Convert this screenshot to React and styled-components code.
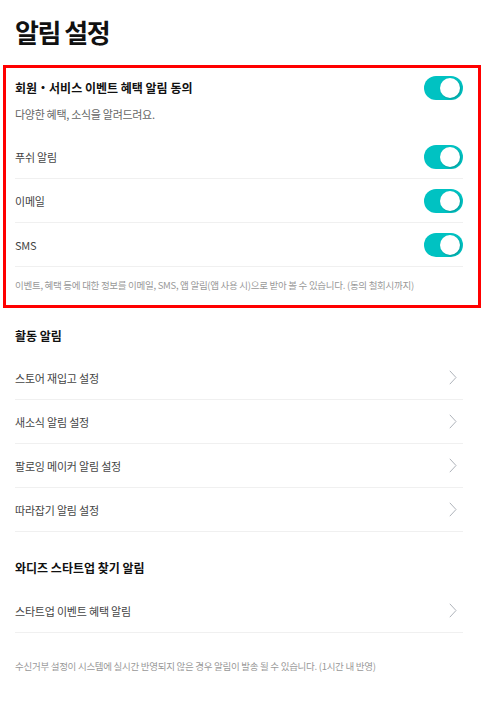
import React from 'react';
import styled, { createGlobalStyle } from 'styled-components';

const GlobalStyle = createGlobalStyle`
  body {
    margin: 0;
    background: #ffffff;
    font-family: 'Noto Sans CJK KR', 'Noto Sans', sans-serif;
    color: #333333;
  }
`;

const Page = styled.div`
  width: 448px;
  padding: 14px 27px 30px 15px;
`;

const PageTitle = styled.h1`
  margin: 0 0 15px;
  font-size: 26px;
  line-height: 36px;
  font-weight: 700;
  color: #111111;
  letter-spacing: -1.5px;
`;

const Highlight = styled.section`
  margin: 0 -18px 0 -12px;
  padding: 8px 15px 12px 9px;
  border: 3px solid #ff0000;
`;

const HeaderRow = styled.div`
  display: flex;
  align-items: center;
  justify-content: space-between;
  height: 24px;
`;

const SectionTitle = styled.h2`
  margin: ${({ $top }) => $top || 0}px 0 0;
  font-size: 12px;
  line-height: 20px;
  font-weight: 700;
  color: #111111;
`;

const Subtitle = styled.p`
  margin: 6px 0 13px;
  font-size: 11px;
  line-height: 16px;
  color: #666666;
  letter-spacing: -0.3px;
`;

const List = styled.div`
  margin-top: ${({ $top }) => $top || 0}px;
`;

const Row = styled.div`
  display: flex;
  align-items: center;
  justify-content: space-between;
  height: 43px;
  border-bottom: 1px solid #f0f0f0;
  font-size: 11px;
  color: #444444;
  letter-spacing: -0.2px;
`;

const Note = styled.p`
  margin: ${({ $top }) => $top || 0}px 0 0;
  font-size: 9.5px;
  line-height: 16px;
  color: #999999;
  letter-spacing: -0.28px;
`;

const Track = styled.span`
  position: relative;
  display: inline-block;
  width: 39px;
  height: 24px;
  border-radius: 12px;
  background: ${({ $on }) => ($on ? '#00c2c2' : '#dddddd')};
  flex-shrink: 0;
`;

const Knob = styled.span`
  position: absolute;
  top: 2px;
  ${({ $on }) => ($on ? 'right: 3px;' : 'left: 3px;')}
  width: 20px;
  height: 20px;
  border-radius: 50%;
  background: #ffffff;
  box-shadow: 1px 1px 2px rgba(0, 0, 0, 0.2);
`;

const ChevronBox = styled.span`
  display: inline-flex;
  margin-right: 6px;
`;

const Toggle = ({ on = true }) => (
  <Track $on={on}>
    <Knob $on={on} />
  </Track>
);

const Chevron = () => (
  <ChevronBox>
    <svg width="8" height="15" viewBox="0 0 8 15" fill="none">
      <path d="M0.8 0.8 L7 7.5 L0.8 14.2" stroke="#aeb3ba" strokeWidth="1" />
    </svg>
  </ChevronBox>
);

const channels = ['푸쉬 알림', '이메일', 'SMS'];
const activity = ['스토어 재입고 설정', '새소식 알림 설정', '팔로잉 메이커 알림 설정', '따라잡기 알림 설정'];

export default function App() {
  return (
    <>
      <GlobalStyle />
      <Page>
        <PageTitle>알림 설정</PageTitle>

        <Highlight>
          <HeaderRow>
            <SectionTitle>회원・서비스 이벤트 혜택 알림 동의</SectionTitle>
            <Toggle />
          </HeaderRow>
          <Subtitle>다양한 혜택, 소식을 알려드려요.</Subtitle>
          {channels.map((name) => (
            <Row key={name}>
              {name}
              <Toggle />
            </Row>
          ))}
          <Note $top={10}>
            이벤트, 혜택 등에 대한 정보를 이메일, SMS, 앱 알림(앱 사용 시)으로 받아 볼 수 있습니다. (동의 철회시까지)
          </Note>
        </Highlight>

        <SectionTitle $top={18}>활동 알림</SectionTitle>
        <List $top={10}>
          {activity.map((name) => (
            <Row key={name}>
              {name}
              <Chevron />
            </Row>
          ))}
        </List>

        <SectionTitle $top={26}>와디즈 스타트업 찾기 알림</SectionTitle>
        <List $top={11}>
          <Row>
            스타트업 이벤트 혜택 알림
            <Chevron />
          </Row>
        </List>

        <Note $top={25}>
          수신거부 설정이 시스템에 실시간 반영되지 않은 경우 알림이 발송 될 수 있습니다. (1시간 내 반영)
        </Note>
      </Page>
    </>
  );
}
